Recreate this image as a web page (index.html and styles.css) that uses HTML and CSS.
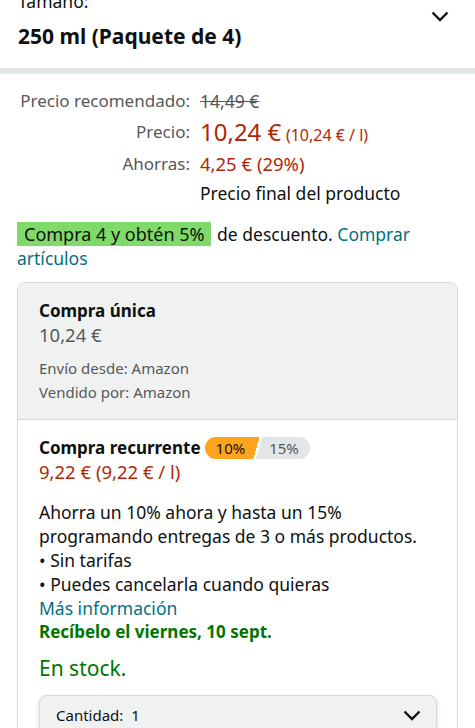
FILE: index.html
```html
<!DOCTYPE html>
<html lang="es">
<head>
<meta charset="utf-8">
<link rel="stylesheet" href="styles.css">
</head>
<body>
<div class="size">
  <div class="size-text">
    <div class="size-label">Tamaño:</div>
    <div class="size-value">250 ml (Paquete de 4)</div>
  </div>
  <svg class="chev top-chev" width="18" height="11" viewBox="0 0 18 11"><polyline points="1.5,1.5 9,9 16.5,1.5" fill="none" stroke="#0F1111" stroke-width="2.4"/></svg>
</div>
<div class="divider-bar"></div>

<div class="prices">
  <div class="lbl">Precio recomendado:</div>
  <div class="val strike">14,49 €</div>
  <div class="lbl lbl-price">Precio:</div>
  <div class="val red"><span class="big">10,24 €</span> <span class="unit">(10,24 € / l)</span></div>
  <div class="lbl lbl-save">Ahorras:</div>
  <div class="val red val-save">4,25 € (29%)</div>
  <div></div>
  <div class="val dark">Precio final del producto</div>
</div>

<p class="promo"><span class="promo-badge">Compra 4 y obtén 5%</span> de descuento. <a class="link">Comprar artículos</a></p>

<div class="card">
  <div class="sec sec-one">
    <div class="title">Compra única</div>
    <div class="grey num">10,24 €</div>
    <div class="meta">
      <div>Envío desde: Amazon</div>
      <div>Vendido por: Amazon</div>
    </div>
  </div>
  <div class="sec sec-two">
    <div class="title-row">
      <span class="title">Compra recurrente</span>
      <span class="pill"><span class="pill-on">10%</span><span class="pill-off">15%</span></span>
    </div>
    <div class="red num">9,22 € (9,22 € / l)</div>
    <div class="desc">
      <div>Ahorra un 10% ahora y hasta un 15% programando entregas de 3 o más productos.</div>
      <div>• Sin tarifas</div>
      <div>• Puedes cancelarla cuando quieras</div>
      <a class="link">Más información</a>
      <div class="delivery">Recíbelo el viernes, 10 sept.</div>
    </div>
    <div class="stock">En stock.</div>
    <div class="qty">
      <span>Cantidad:&nbsp; 1</span>
      <svg class="chev" width="18" height="11" viewBox="0 0 18 11"><polyline points="1.5,1.5 9,9 16.5,1.5" fill="none" stroke="#0F1111" stroke-width="2.4"/></svg>
    </div>
  </div>
</div>
</body>
</html>
```

FILE: styles.css
```css
* { box-sizing: border-box; }
html, body { margin: 0; padding: 0; background: #fff; }
body {
  font-family: "Noto Sans", "Liberation Sans", sans-serif;
  font-size: 17.5px;
  line-height: 24px;
  color: #0F1111;
  overflow: hidden;
}
.size {
  display: flex;
  justify-content: space-between;
  align-items: flex-start;
  padding: 0 26px 18px 18px;
}
.size-label { margin-top: -12px; line-height: 26px; font-size: 17.5px; }
.size-value { margin-top: 8px; font-size: 21px; line-height: 28px; font-weight: 700; }
.top-chev { margin-top: 11px; }
.divider-bar { height: 6px; background: #E3E6E6; }

.prices {
  display: grid;
  grid-template-columns: 190px 1fr;
  column-gap: 10px;
  row-gap: 4px;
  padding-top: 15px;
  align-items: center;
}
.lbl { text-align: right; color: #565959; font-size: 17px; }
.val { white-space: nowrap; }
.strike { color: #565959; text-decoration: line-through; }
.red { color: #B12704; }
.big { font-size: 24px; line-height: 30px; }
.unit { font-size: 16px; }
.lbl-price { line-height: 30px; }
.val-save, .lbl-save { line-height: 26px; }
.val-save { font-size: 18.5px; }
.dark { color: #0F1111; }

.promo { margin: 17px 17px 0 17px; }
.promo-badge { background: #7FDA69; padding: 0 6px 0 7px; margin-right: 2px; font-size: 18px; }
.link { color: #007185; text-decoration: none; }

.card {
  margin: 12px 17px 0 17px;
  border: 1px solid #D5D9D9;
  border-radius: 8px;
  overflow: hidden;
}
.sec { padding: 16px 20px 15px 21px; }
.sec-one { background: #F0F2F2; border-bottom: 1px solid #D5D9D9; }
.title { font-weight: 700; font-size: 17px; }
.grey { color: #565959; }
.num { font-size: 18.5px; }
.meta { margin-top: 9px; font-size: 15px; color: #565959; }

.title-row { display: flex; align-items: center; gap: 4px; }
.pill {
  display: inline-flex;
  height: 22px;
  border-radius: 11px;
  font-size: 15px;
  line-height: 22px;
  background: linear-gradient(106deg, #FFA41C 0 49%, #fff 49% 51.5%, #E3E6E6 51.5%);
}
.pill-on { padding: 0 12px 0 11px; color: #0F1111; }
.pill-off { padding: 0 11px 0 12px; color: #565959; }
.desc { margin-top: 16px; }
.desc .link { display: block; }
.delivery { color: #007600; font-weight: 700; font-size: 17px; }
.stock { margin-top: 9px; font-size: 21px; line-height: 30px; color: #007600; }
.qty {
  margin-top: 12px;
  height: 40px;
  display: flex;
  align-items: center;
  justify-content: space-between;
  padding: 0 15px 0 16px;
  background: #F0F2F2;
  border: 1px solid #D5D9D9;
  border-radius: 8px;
  box-shadow: 0 2px 5px rgba(15,17,17,0.15);
  font-size: 15px;
}
.chev { display: block; }
```
